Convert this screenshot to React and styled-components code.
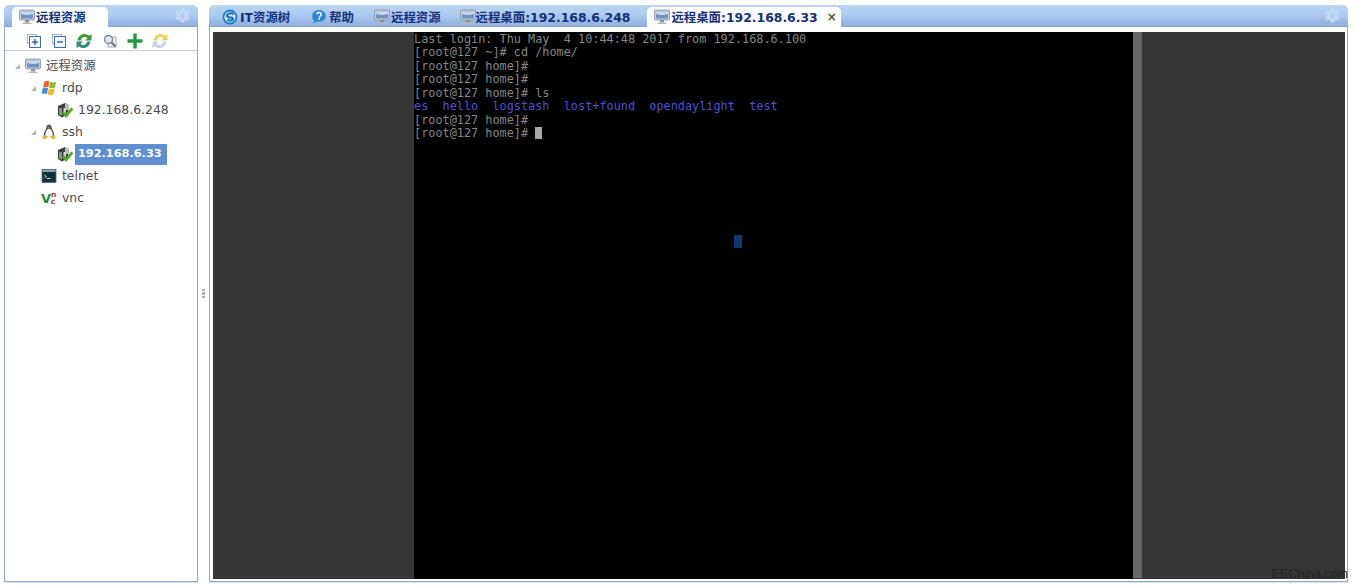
import React from 'react';
import styled, { createGlobalStyle } from 'styled-components';
import { FaCog } from 'react-icons/fa';

const Global = createGlobalStyle`
  html, body { margin: 0; padding: 0; background: #fff; }
  body { font-family: "DejaVu Sans", "Noto Sans CJK SC", sans-serif; }
`;

const Page = styled.div`
  display: flex;
  width: 1355px;
  height: 587px;
  box-sizing: border-box;
  padding: 5px 7px 5px 4px;
  overflow: hidden;
  position: relative;
`;

const Panel = styled.section`
  display: flex;
  flex-direction: column;
  box-sizing: border-box;
  width: ${p => p.$width || 'auto'};
  flex: ${p => (p.$grow ? 1 : 'none')};
  background: #fff;
  border: 1px solid #8fa6c4;
  border-top: none;
  border-radius: 6px 6px 0 0;
  box-shadow: 0 1px 0 #dbe6f3;
`;

const Header = styled.header`
  display: flex;
  align-items: flex-end;
  height: 21px;
  margin: 0 -1px;
  padding-left: ${p => p.$pad}px;
  padding-right: 8px;
  border-radius: 6px 6px 0 0;
  border-bottom: 1px solid #86a5d0;
  background: linear-gradient(#bcd3f0 0%, #aecbf1 45%, #8fb0de 100%);
`;

const Tabs = styled.div`
  display: flex;
  align-items: flex-end;
  flex: 1;
`;

const Tab = styled.div`
  display: flex;
  align-items: center;
  box-sizing: border-box;
  height: ${p => (p.$active ? 20 : 19)}px;
  margin-right: ${p => p.$gap || 0}px;
  margin-bottom: ${p => (p.$active ? -1 : 0)}px;
  padding: 0 ${p => p.$padR ?? 7}px 0 7px;
  border-radius: 5px 5px 0 0;
  background: ${p => (p.$active ? '#fff' : 'transparent')};
  color: #12317a;
  font-size: 12.4px;
  font-weight: bold;
  white-space: nowrap;
`;

const TabIcon = styled.span`
  display: flex;
  width: 16px;
  height: 16px;
  margin-right: ${p => p.$gap ?? 1}px;
`;

const CloseMark = styled.span`
  margin-left: 9px;
  color: #4a5a20;
  font-size: 12px;
  font-weight: bold;
`;

const Gear = styled(FaCog)`
  align-self: center;
  color: #c5d8f2;
  font-size: 15px;
  flex: none;
`;

const Toolbar = styled.div`
  display: flex;
  align-items: center;
  box-sizing: border-box;
  height: 24px;
  padding: 4px 0 0 21px;
  gap: 9.2px;
  border-bottom: 1px solid #c4ccd6;
`;

const ToolButton = styled.span`
  display: flex;
  width: 16px;
  height: 16px;
`;

const Tree = styled.ul`
  list-style: none;
  margin: 0;
  padding: 4px 0 0;
`;

const Row = styled.li`
  display: flex;
  align-items: center;
  height: 22px;
  padding-left: ${p => 8 + p.$level * 16}px;
  color: #4c4c4c;
  font-size: 12.4px;
`;

const Arrow = styled.span`
  width: 8px;
  height: 8px;
  margin-right: 4px;
  flex: none;
  display: flex;
  align-items: center;
  justify-content: center;
  &::before {
    content: '';
    visibility: ${p => (p.$hidden ? 'hidden' : 'visible')};
    border-style: solid;
    border-width: 0 0 5px 5px;
    border-color: transparent transparent #b4b4b4 transparent;
  }
`;

const NodeIcon = styled.span`
  display: flex;
  width: 16px;
  height: 16px;
  margin-right: ${p => p.$gap ?? 5}px;
  flex: none;
`;

const Label = styled.span`
  display: block;
  height: 21px;
  line-height: 20px;
  padding: 0 ${p => (p.$selected ? 5 : 1)}px 0 3px;
  margin-left: -3px;
  white-space: nowrap;
  ${p => p.$selected && 'background: #5f8fd1; color: #fff; font-weight: bold; font-size: 11.3px; box-sizing: border-box; width: 92px;'}
`;

const Splitter = styled.div`
  flex: none;
  width: 11px;
  display: flex;
  flex-direction: column;
  align-items: center;
  justify-content: center;
  gap: 1px;
  box-sizing: border-box;
`;

const Grip = styled.i`
  display: block;
  width: 3px;
  height: 2.5px;
  background: #a4adb8;
`;

const Viewport = styled.div`
  flex: 1;
  display: flex;
  margin: 5px 2px 2px 3px;
  background: #363636;
  min-height: 0;
`;

const Terminal = styled.div`
  box-sizing: border-box;
  width: 719px;
  margin-left: 201px;
  padding-top: 1px;
  background: #000;
  color: #868686;
  font-family: "DejaVu Sans Mono", monospace;
  font-size: 11.85px;
  line-height: 13.45px;
  white-space: pre;
  position: relative;
`;

const Line = styled.div`
  color: ${p => p.$color || 'inherit'};
  height: 13.45px;
`;

const Cursor = styled.span`
  display: inline-block;
  width: 7px;
  height: 12px;
  background: #a8a8a8;
  vertical-align: -2px;
`;

const Stray = styled.span`
  position: absolute;
  left: 320px;
  top: 203px;
  width: 8px;
  height: 13px;
  background: #0b3a72;
`;

const Scrollbar = styled.div`
  width: 9px;
  background: #666;
  margin-bottom: 1px;
`;

const Watermark = styled.span`
  position: absolute;
  right: 7px;
  bottom: 6px;
  font-family: "Liberation Sans", sans-serif;
  font-size: 12.5px;
  color: #222;
`;

const Svg = ({ children }) => (
  <svg width="16" height="16" viewBox="0 0 16 16">{children}</svg>
);

const Monitor = () => (
  <Svg>
    <rect x="0.5" y="1" width="15" height="10" rx="1" fill="#c9ccd2" stroke="#8a8f98" strokeWidth=".8" />
    <rect x="2" y="2.5" width="12" height="7" fill="#6f93c4" />
    <path d="M2 2.500h12v2.500c-4 1.400-8 1.400-12 0z" fill="#c6d8ef" />
    <rect x="6" y="11" width="4" height="2.500" fill="#8d9299" />
    <rect x="3.500" y="13.500" width="9" height="1.500" rx=".6" fill="#b4b8bd" />
  </Svg>
);

const Swirl = () => (
  <Svg>
    <circle cx="8" cy="8" r="7.400" fill="#1d7fc4" />
    <circle cx="8" cy="8" r="5.600" fill="#cfe6f6" />
    <path d="M11.500 5.500C9.500 3.500 5 4.200 5 6.800c0 2.600 6 1 6 3.200 0 1.700-3.600 2-5.600.6" fill="none" stroke="#1670b4" strokeWidth="2" />
  </Svg>
);

const Help = () => (
  <Svg>
    <path d="M8 1c4 0 7 2.500 7 6s-3 6-7 6c-.7 0-1.400-.1-2-.2L1.500 15l1.500-3.400C1.700 10.500 1 9 1 7c0-3.500 3-6 7-6z" fill="#2c86d4" stroke="#7fb8e6" strokeWidth=".8" />
    <path d="M5.800 5.400c.3-1.300 1.200-1.900 2.300-1.900 1.300 0 2.200.8 2.200 1.900 0 1.700-2.200 1.500-2.200 3.100" fill="none" stroke="#fff" strokeWidth="1.500" />
    <rect x="7.300" y="9.300" width="1.600" height="1.600" fill="#fff" />
  </Svg>
);

const WindowsFlag = () => (
  <Svg>
    <path d="M3.500 1.500c1.800-.9 3.500-.8 5 0L7.300 7.400C5.800 6.600 4 6.500 2 7.400z" fill="#e8642c" />
    <path d="M9.200 1.800c1.800.9 3.500.9 6 0l-1.300 5.800c-2.100.9-3.900.9-5.800 0z" fill="#8cbb2e" />
    <path d="M1.800 8.200c1.900-.9 3.700-.8 5.300 0L5.800 14.200c-1.500-.8-3.300-.9-5.300 0z" fill="#3d8fe0" />
    <path d="M7.900 8.400c1.900.9 3.600.9 5.800 0l-1.300 5.900c-2.200.9-4 .9-5.800 0z" fill="#f3b81f" />
  </Svg>
);

const Penguin = () => (
  <Svg>
    <path d="M8 .5c1.900 0 2.700 1.500 2.700 3.300 0 1.600 2.500 4 2.500 6.800 0 1.300-1 2.400-2.200 2.400H5c-1.200 0-2.200-1.100-2.200-2.400 0-2.800 2.500-5.200 2.500-6.800C5.300 2 6.100.5 8 .5z" fill="#55575a" />
    <path d="M8 4.800c1.900 0 3.700 3.400 3.700 6 0 1.500-1.600 2.200-3.700 2.200s-3.700-.7-3.700-2.200C4.300 8.200 6.100 4.800 8 4.800z" fill="#f6f6f6" />
    <path d="M6.800 3.400h2.400L8 4.800z" fill="#f0b420" />
    <path d="M1.800 11.800l3.200-.6.9 3.300c-1.400.9-3 .7-4.500-.2zM14.200 11.800l-3.200-.6-.9 3.300c1.400.9 3 .7 4.500-.2z" fill="#f0b420" />
  </Svg>
);

const Server = () => (
  <Svg>
    <path d="M1 4l7-3 3 1.500V12l-6 3.500L1 13z" fill="#3f3f3f" />
    <path d="M8 1l4 1.800V8H8z" fill="#b9bcbf" />
    <path d="M2 5.500l3 1.200v7L2 12.500z" fill="#8f9295" />
    <rect x="6.500" y="6" width="2.500" height="5" fill="#cfd2d4" />
    <path d="M6 10.500l3 3.300L15.300 6.300" fill="none" stroke="#55ab1f" strokeWidth="2.800" />
  </Svg>
);

const TermIcon = () => (
  <Svg>
    <rect x="1" y="1.500" width="14" height="13" fill="#10303c" stroke="#5c6f78" strokeWidth=".8" />
    <rect x="1.500" y="2" width="13" height="2" fill="#8fa3ad" />
    <path d="M3.500 7l2 1.500-2 1.500" fill="none" stroke="#e8eef0" strokeWidth=".9" />
    <path d="M6 10.500h3.500" stroke="#e8eef0" strokeWidth=".9" />
  </Svg>
);

const VncIcon = () => (
  <Svg>
    <text x="0" y="13" fontSize="13" fontWeight="bold" fontFamily="DejaVu Sans" fill="#1d8a3f">
      V
      <tspan fontSize="7.5" fill="#c8322d" dy="-6">n</tspan>
      <tspan fontSize="7.5" fill="#c8322d" x="9.800" dy="7">c</tspan>
    </text>
  </Svg>
);

const ExpandAll = ({ minus }) => (
  <Svg>
    <rect x="1.500" y="1.500" width="9" height="9" fill="#fff" stroke="#9db4cc" />
    <rect x="3.500" y="3.500" width="11" height="11" fill="#eef5fc" stroke="#3f6f9e" />
    <path d="M6 9h6" stroke="#1f4f80" strokeWidth="1.200" />
    {!minus && <path d="M9 6v6" stroke="#1f4f80" strokeWidth="1.200" />}
  </Svg>
);

const Refresh = ({ light }) => (
  <Svg>
    <path d="M1.500 7.500C2 3.500 5 1 8.500 1c2 0 3.400.8 4.500 1.800L15.500 1v6.500H9l2.400-2.200c-.8-.8-1.800-1.200-2.900-1.200-1.900 0-3.200 1.200-3.600 3.400z" fill={light ? '#f2cf6a' : '#3f9a3a'} />
    <path d="M14.500 8.500C14 12.500 11 15 7.500 15c-2 0-3.400-.8-4.500-1.800L.5 15V8.500H7l-2.400 2.200c.8.8 1.800 1.200 2.900 1.200 1.900 0 3.200-1.200 3.600-3.400z" fill={light ? '#c9d6e6' : '#2f8f78'} />
  </Svg>
);

const SearchIcon = () => (
  <Svg>
    <rect x="6" y="4" width="8" height="10" fill="#eceff2" stroke="#a4a9af" />
    <circle cx="6.500" cy="6.500" r="4" fill="#dfe9f3" stroke="#7d8794" strokeWidth="1.400" />
    <path d="M9.500 9.500l4 4" stroke="#6d7680" strokeWidth="2" />
  </Svg>
);

const PlusIcon = () => (
  <Svg>
    <path d="M6.300 .5h3.400v5.800h5.800v3.400H9.700v5.800H6.300V9.700H.5V6.300h5.800z" fill="#1d9a3c" />
  </Svg>
);

const tools = [<ExpandAll />, <ExpandAll minus />, <Refresh />, <SearchIcon />, <PlusIcon />, <Refresh light />];

const tabs = [
  { icon: <Swirl />, text: 'IT资源树', gap: 7, iconGap: 2 },
  { icon: <Help />, text: '帮助', gap: 6, iconGap: 2 },
  { icon: <Monitor />, text: '远程资源', gap: 5, iconGap: 1 },
  { icon: <Monitor />, text: '远程桌面:192.168.6.248', gap: 10, iconGap: 0 },
];

const nodes = [
  { level: 0, icon: <Monitor />, text: '远程资源', arrow: true },
  { level: 1, icon: <WindowsFlag />, text: 'rdp', arrow: true },
  { level: 2, icon: <Server />, text: '192.168.6.248' },
  { level: 1, icon: <Penguin />, text: 'ssh', arrow: true },
  { level: 2, icon: <Server />, text: '192.168.6.33', selected: true },
  { level: 1, icon: <TermIcon />, text: 'telnet' },
  { level: 1, icon: <VncIcon />, text: 'vnc' },
];

const lines = [
  { text: 'Last login: Thu May  4 10:44:48 2017 from 192.168.6.100' },
  { text: '[root@127 ~]# cd /home/' },
  { text: '[root@127 home]#' },
  { text: '[root@127 home]#' },
  { text: '[root@127 home]# ls' },
  { text: 'es  hello  logstash  lost+found  opendaylight  test', color: '#5050d8' },
  { text: '[root@127 home]#' },
  { text: '[root@127 home]# ', cursor: true },
];

export default function App() {
  return (
    <Page>
      <Global />
      <Panel $width="194px">
        <Header $pad={8}>
          <Tabs>
            <Tab $active $padR={22}>
              <TabIcon>
                <Monitor />
              </TabIcon>
              远程资源
            </Tab>
          </Tabs>
          <Gear />
        </Header>
        <Toolbar>
          {tools.map((t, i) => <ToolButton key={i}>{t}</ToolButton>)}
        </Toolbar>
        <Tree>
          {nodes.map((n, i) => (
            <Row key={i} $level={n.level}>
              <Arrow $hidden={!n.arrow} />
              <NodeIcon>{n.icon}</NodeIcon>
              <Label $selected={n.selected}>{n.text}</Label>
            </Row>
          ))}
        </Tree>
      </Panel>
      <Splitter>
        <Grip />
        <Grip />
        <Grip />
      </Splitter>
      <Panel $grow>
        <Header $pad={6}>
          <Tabs>
            {tabs.map(t => (
              <Tab key={t.text} $gap={t.gap}>
                <TabIcon $gap={t.iconGap}>{t.icon}</TabIcon>
                {t.text}
              </Tab>
            ))}
            <Tab $active $padR={4}>
              <TabIcon>
                <Monitor />
              </TabIcon>
              远程桌面:192.168.6.33
              <CloseMark>×</CloseMark>
            </Tab>
          </Tabs>
          <Gear />
        </Header>
        <Viewport>
          <Terminal>
            {lines.map((l, i) => (
              <Line key={i} $color={l.color}>
                {l.text}
                {l.cursor && <Cursor />}
              </Line>
            ))}
            <Stray />
          </Terminal>
          <Scrollbar />
        </Viewport>
      </Panel>
      <Watermark>EEChina.com</Watermark>
    </Page>
  );
}
